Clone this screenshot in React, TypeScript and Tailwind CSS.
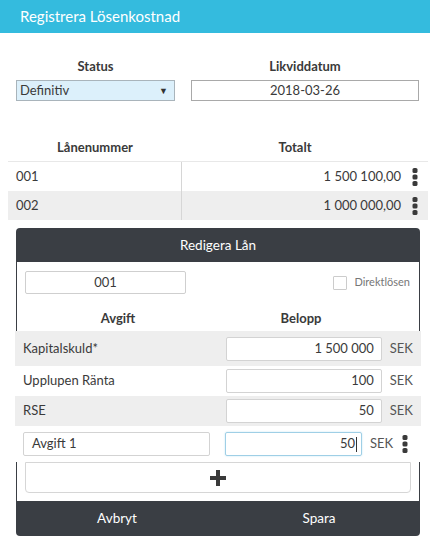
import { useState } from 'react'

interface FeeRow {
  label: string
  amount: string
}

const loans = [
  { id: '001', total: '1 500 100,00' },
  { id: '002', total: '1 000 000,00' },
]

const fees: FeeRow[] = [
  { label: 'Kapitalskuld*', amount: '1 500 000' },
  { label: 'Upplupen Ränta', amount: '100' },
  { label: 'RSE', amount: '50' },
]

function Kebab() {
  return (
    <svg width="6" height="18" viewBox="0 0 6 18" className="shrink-0">
      <rect x="0.5" y="0" width="5" height="5" rx="1.6" fill="#3a3a3a" />
      <rect x="0.5" y="6.5" width="5" height="5" rx="1.6" fill="#3a3a3a" />
      <rect x="0.5" y="13" width="5" height="5" rx="1.6" fill="#3a3a3a" />
    </svg>
  )
}

function PlusIcon() {
  return (
    <svg width="16" height="16" viewBox="0 0 16 16">
      <path d="M6 0h4v6h6v4h-6v6h-4v-6h-6v-4h6z" fill="#3a3a3a" />
    </svg>
  )
}

export default function App() {
  const [status, setStatus] = useState('Definitiv')
  const [direct, setDirect] = useState(false)

  return (
    <div className="min-h-[547px] w-[430px] bg-white font-['Lato',sans-serif] text-[#3a3a3a]">
      <div className="flex h-[33px] items-center bg-[#34bbde] px-5 text-[15px] text-white">
        Registrera Lösenkostnad
      </div>

      <div className="mt-[24px] flex gap-4 pl-4">
        <div className="w-[159px]">
          <div className="mb-[5px] text-center text-[13px] font-bold leading-[18px]">Status</div>
          <label className="relative flex h-[21px] items-center border border-[#a9b4bb] bg-[#dcf0fb] pl-[3px] text-[13px]">
            <select
              value={status}
              onChange={(e) => setStatus(e.target.value)}
              className="h-full w-full appearance-none bg-transparent outline-none"
            >
              <option>Definitiv</option>
              <option>Preliminär</option>
            </select>
            <span className="pointer-events-none absolute right-[6px] text-[9px] text-[#333]">▼</span>
          </label>
        </div>
        <div className="w-[228px]">
          <div className="mb-[5px] text-center text-[13px] font-bold leading-[18px]">Likviddatum</div>
          <div className="flex h-[21px] items-center justify-center border border-[#a9a9a9] text-[13px]">
            2018-03-26
          </div>
        </div>
      </div>

      <div className="ml-2 mt-[33px] w-[420px] text-[13px]">
        <div className="flex h-[28px] items-center border-b border-[#e8e8e8] font-bold">
          <div className="w-[174px] text-center">Lånenummer</div>
          <div className="flex-1 pr-[20px] text-center">Totalt</div>
        </div>
        {loans.map((loan, i) => (
          <div key={loan.id} className={`flex h-[29px] items-center ${i % 2 ? 'bg-[#eeeeee]' : 'bg-white'}`}>
            <div className="flex h-full w-[174px] items-center border-r border-[#d6d6d6] pl-2">{loan.id}</div>
            <div className="flex flex-1 items-center justify-end gap-[11px] pr-[10px]">
              <span>{loan.total}</span>
              <Kebab />
            </div>
          </div>
        ))}
      </div>

      <div className="ml-4 mt-2 w-[404px]">
        <div className="flex h-[34px] items-center justify-center rounded-t-[4px] bg-[#3a3e44] text-[13.5px] text-white">
          Redigera Lån
        </div>
        <div className="border-x border-[#3a3e44] px-2 pt-[9px]">
          <div className="flex items-center justify-between">
            <div className="flex h-[23px] w-[161px] items-center justify-center rounded-[2px] border border-[#cfcfcf] text-[13px]">
              001
            </div>
            <label className="mr-[1px] flex items-center gap-[7px] text-[11px] text-[#777]">
              <input
                type="checkbox"
                checked={direct}
                onChange={() => setDirect(!direct)}
                className="h-[14px] w-[14px] appearance-none rounded-[1px] border border-[#cccccc]"
              />
              Direktlösen
            </label>
          </div>
          <div className="flex h-[37px] pt-[15px] text-[13px] font-bold leading-[18px]">
            <div className="w-[186px] text-center">Avgift</div>
            <div className="flex-1 pr-[20px] text-center">Belopp</div>
          </div>
        </div>

        <div className="-mx-px text-[13px]">
          {fees.map((fee, i) => (
            <div
              key={fee.label}
              className={`flex items-center pl-2 pr-[8px] ${i === 0 ? 'h-[35px]' : 'h-[30px]'} ${i % 2 ? 'bg-white' : 'bg-[#eeeeee]'}`}
            >
              <div className="w-[203px]">{fee.label}</div>
              <div className="flex h-[24px] w-[156px] items-center justify-end rounded-[2px] border border-[#d3d3d3] bg-white pr-[7px]">
                {fee.amount}
              </div>
              <div className="ml-[8px] text-[#555]">SEK</div>
            </div>
          ))}
          <div className="flex h-[36px] items-center bg-white pl-2 pr-[13px]">
            <div className="flex h-[24px] w-[187px] items-center rounded-[2px] border border-[#d3d3d3] pl-[8px]">
              Avgift 1
            </div>
            <div className="ml-[15px] flex h-[24px] w-[137px] items-center justify-end rounded-[2px] border border-[#9fcfe6] pr-[4px] shadow-[0_0_2px_#bfe3f3]">
              50<span className="ml-[1px] h-[15px] w-px bg-[#333]" />
            </div>
            <div className="ml-[8px] text-[#555]">SEK</div>
            <div className="ml-auto">
              <Kebab />
            </div>
          </div>
        </div>

        <div className="border-x border-[#3a3e44] px-2 pb-[8px]">
          <button
            type="button"
            className="flex h-[31px] w-full items-center justify-center rounded-b-[4px] border border-[#d6d6d6]"
          >
            <PlusIcon />
          </button>
        </div>

        <div className="flex h-[35px] items-center rounded-b-[4px] bg-[#3a3e44] text-[13.5px] text-white">
          <button type="button" className="w-1/2 text-center">Avbryt</button>
          <button type="button" className="w-1/2 text-center">Spara</button>
        </div>
      </div>
    </div>
  )
}
